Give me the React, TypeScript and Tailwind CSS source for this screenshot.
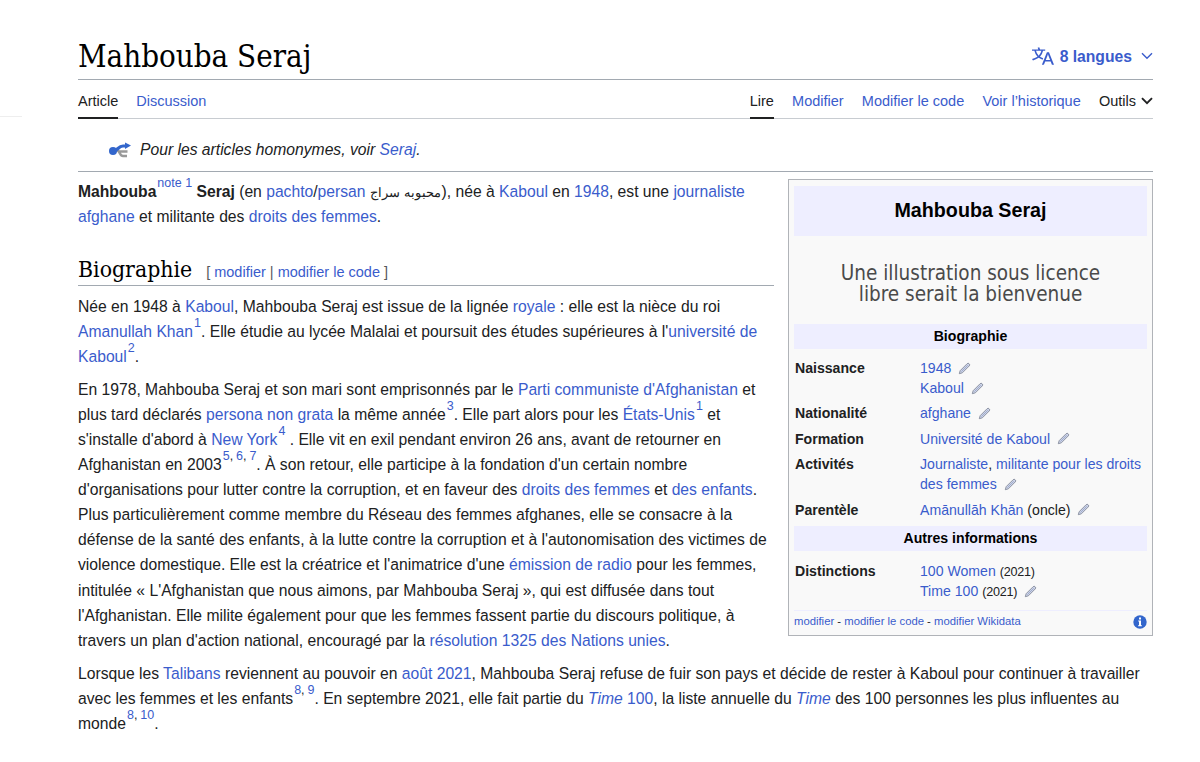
import React from "react";

const sans = "font-['Liberation_Sans',Arial,sans-serif]";
const serif = "font-['DejaVu_Serif_Condensed','DejaVu_Serif',serif]";

function A({ children }: { children: React.ReactNode }) {
  return (
    <a href="#" className="text-[#3a5ccc]">
      {children}
    </a>
  );
}

function Sup({ children }: { children: React.ReactNode }) {
  return (
    <sup className="relative top-[-10px] ml-px align-baseline text-[12.5px] leading-none text-[#3a5ccc]">
      {children}
    </sup>
  );
}

function Refs({ ids }: { ids: number[] }) {
  return (
    <Sup>
      {ids.map((id, i) => (
        <React.Fragment key={id}>
          {i > 0 && <span className="text-[#202122] [word-spacing:-0.6px]">, </span>}
          {id}
        </React.Fragment>
      ))}
    </Sup>
  );
}

function Pencil() {
  return (
    <svg viewBox="0 0 12 12" className="ml-[7px] inline-block h-[13px] w-[13px] align-[-1.5px]">
      <path
        d="M1.2 10.8 2 8 8.4 1.6a1.2 1.2 0 0 1 1.8 0l.2.2a1.2 1.2 0 0 1 0 1.8L4 10z"
        fill="#cdd4e8"
        stroke="#7f8798"
        strokeWidth="0.8"
        strokeLinejoin="round"
      />
      <path d="M3.2 8.8 9 3" stroke="#9aa6c8" strokeWidth="0.8" />
    </svg>
  );
}

function Row({ label, children }: { label: string; children: React.ReactNode }) {
  return (
    <div className="flex pl-px">
      <div className="w-[125px] shrink-0 font-bold">{label}</div>
      <div className="whitespace-nowrap">{children}</div>
    </div>
  );
}

function Infobox() {
  return (
    <aside className="mt-[7px] flex h-[457px] w-[365px] shrink-0 flex-col border border-[#b0b3b8] bg-[#f9f9f9] px-[5px] pt-1.5 text-[14.1px] leading-5">
      <div className="flex h-[50px] items-center justify-center bg-[#eeeeff] pb-0.5 text-[19.7px] font-bold text-black">
        Mahbouba Seraj
      </div>
      <div className="flex h-[88px] flex-col justify-center pt-[7px] text-center font-['DejaVu_Sans_Condensed','Noto_Sans',sans-serif] text-[20.5px] leading-[21px] text-[#4a4a4a]">
        <span>Une illustration sous licence</span>
        <span>libre serait la bienvenue</span>
      </div>
      <div className="flex h-[25px] items-center justify-center bg-[#eeeeff] pb-px font-bold text-black">
        Biographie
      </div>
      <div className="flex flex-col gap-[5.4px] pt-[9px]">
        <Row label="Naissance">
          <A>1948</A>
          <Pencil />
          <br />
          <A>Kaboul</A>
          <Pencil />
        </Row>
        <Row label="Nationalité">
          <A>afghane</A>
          <Pencil />
        </Row>
        <Row label="Formation">
          <A>Université de Kaboul</A>
          <Pencil />
        </Row>
        <Row label="Activités">
          <A>Journaliste</A>, <A>militante pour les droits</A>
          <br />
          <A>des femmes</A>
          <Pencil />
        </Row>
        <Row label="Parentèle">
          <A>Amānullāh Khān</A> (oncle)
          <Pencil />
        </Row>
      </div>
      <div className="mt-[6.5px] flex h-[25px] items-center justify-center bg-[#eeeeff] pb-px font-bold text-black">
        Autres informations
      </div>
      <div className="pt-[11px] leading-[19px]">
        <Row label="Distinctions">
          <A>100 Women</A> <span className="text-[12.6px] tracking-[-0.2px]">(2021)</span>
          <br />
          <A>Time 100</A> <span className="text-[12.6px] tracking-[-0.2px]">(2021)</span>
          <Pencil />
        </Row>
      </div>
      <div className="mt-2 flex h-[22px] items-center justify-between border-t border-[#eeeeff] text-[11.3px]">
        <span className="pb-px">
          <A>modifier</A> - <A>modifier le code</A> - <A>modifier Wikidata</A>
        </span>
        <svg viewBox="0 0 14 14" className="mt-px h-3.5 w-3.5">
          <circle cx="7" cy="7" r="6.7" fill="#3366cc" />
          <path d="M6 2.5h2v2H6zM5.2 5.6H8v4.6h.9v1H5.1v-1H6V6.6h-.8z" fill="#fff" />
        </svg>
      </div>
    </aside>
  );
}

function Header() {
  return (
    <header>
      <div className="flex h-[80px] items-end justify-between border-b border-[#a2a9b1]">
        <h1 className={`${serif} pb-1 text-[31px] leading-[38px] text-black`}>Mahbouba Seraj</h1>
        <div className="mb-2.5 flex items-center text-[15.7px] font-bold text-[#3a5ccc]">
          <svg viewBox="0 0 20 20" className="mr-1.5 h-[22px] w-[22px]" fill="currentColor">
            <path d="M20 18h-1.44a.61.61 0 0 1-.4-.12.8.8 0 0 1-.23-.31L17 15h-5l-1 2.54a.8.8 0 0 1-.22.3.6.6 0 0 1-.4.14H9l4.55-11.47h1.89zm-3.53-4.31L14.89 9.5a12 12 0 0 1-.39-1.24q-.09.37-.19.69l-.19.56-1.58 4.19zm-6.3-1.58a13.4 13.4 0 0 1-2.91-1.41 11.46 11.46 0 0 0 2.81-5.37H12V4H7.31a4 4 0 0 0-.2-.56C6.87 2.79 6.6 2 6.6 2l-1.47.5s.4.89.6 1.5H0v1.33h2.15A11.23 11.23 0 0 0 5 10.7a17.2 17.2 0 0 1-5 2.1q.56.82.87 1.38a23.3 23.3 0 0 0 5.22-2.51 15.6 15.6 0 0 0 3.56 1.77zM3.63 5.33h4.91a8.1 8.1 0 0 1-2.45 4.45 9.1 9.1 0 0 1-2.46-4.45" />
          </svg>
          8 langues
          <svg viewBox="0 0 12 8" className="ml-[9px] h-2 w-3" fill="none" stroke="currentColor" strokeWidth="1.4">
            <path d="M1 1.2 6 6.2l5-5" />
          </svg>
        </div>
      </div>
      <nav className="flex h-[39px] justify-between border-b border-[#c8ccd1] text-[14.5px] leading-[42px]">
        <div className="flex gap-[18px]">
          <span className="h-[39px] border-b-2 border-[#202122]">Article</span>
          <A>Discussion</A>
        </div>
        <div className="flex gap-[18.2px]">
          <span className="h-[39px] border-b-2 border-[#202122]">Lire</span>
          <A>Modifier</A>
          <A>Modifier le code</A>
          <A>Voir l’historique</A>
          <span className="flex h-[42px] items-center">
            Outils
            <svg viewBox="0 0 12 8" className="ml-[5px] h-2 w-3" fill="none" stroke="currentColor" strokeWidth="1.9">
              <path d="M1 1.2 6 6.2l5-5" />
            </svg>
          </span>
        </div>
      </nav>
      <div className="flex h-[53px] items-center border-b border-[#a2a9b1] pt-2.5 pl-[31px] italic">
        <svg viewBox="0 0 22 16" className="mr-[9px] h-4 w-[22px] shrink-0" fill="none">
          <path d="M8 8.5c3 0 2.500 5.500 6 5.500h4M10 9.500h8.500" stroke="#999" strokeWidth="2.400" />
          <path d="M4 9c5 0 5-5 10-5h3" stroke="#3366cc" strokeWidth="3.200" />
          <path d="M16 0.500 22 3.500 16 7z" fill="#3366cc" />
          <circle cx="4" cy="9" r="4" fill="#3366cc" />
        </svg>
        <span>
          Pour les articles homonymes, voir <A>Seraj</A>.
        </span>
      </div>
    </header>
  );
}

export default function App() {
  return (
    <div className={`${sans} flex h-[762px] w-[1200px] bg-white text-[15.68px] leading-[25.1px] text-[#202122]`}>
      <div className="mt-[116px] h-px w-[22px] bg-[#eeeeee]" />
      <main className="ml-14 w-[1075px]">
        <Header />
        <div className="flex h-[488.6px] justify-between">
          <article className="w-[696px] pt-[7px] whitespace-nowrap">
            <p>
              <b>Mahbouba</b>
              <Sup>note 1</Sup> <b>Seraj</b> (en <A>pachto</A>/<A>persan</A>{" "}
              <span dir="rtl" className="mr-px text-[13.2px] leading-none">
                محبوبه سراج
              </span>
              ), née à <A>Kaboul</A> en <A>1948</A>, est une <A>journaliste</A>
              <br />
              <A>afghane</A> et militante des <A>droits des femmes</A>.
            </p>
            <h2 className="mt-6 flex h-[33px] items-baseline border-b border-[#a2a9b1]">
              <span className={`${serif} text-[22.8px] leading-[32px] text-black`}>Biographie</span>
              <span className="ml-3.5 text-[14.5px] text-[#54595d]">
                [ <A>modifier</A> | <A>modifier le code</A> ]
              </span>
            </h2>
            <p className="mt-2">
              Née en 1948 à <A>Kaboul</A>, Mahbouba Seraj est issue de la lignée <A>royale</A> : elle est la nièce du
              roi
              <br />
              <A>Amanullah Khan</A>
              <Refs ids={[1]} />. Elle étudie au lycée Malalai et poursuit des études supérieures à l'
              <A>université de</A>
              <br />
              <A>Kaboul</A>
              <Refs ids={[2]} />.
            </p>
            <p className="mt-[7.3px]">
              En 1978, Mahbouba Seraj et son mari sont emprisonnés par le <A>Parti communiste d'Afghanistan</A> et
              <br />
              plus tard déclarés <A>persona non grata</A> la même année
              <Refs ids={[3]} />. Elle part alors pour les <A>États-Unis</A>
              <Refs ids={[1]} /> et
              <br />
              s'installe d'abord à <A>New York</A>
              <Refs ids={[4]} /> . Elle vit en exil pendant environ 26 ans, avant de retourner en
              <br />
              Afghanistan en 2003
              <Refs ids={[5, 6, 7]} />. À son retour, elle participe à la fondation d'un certain nombre
              <br />
              d'organisations pour lutter contre la corruption, et en faveur des <A>droits des femmes</A> et{" "}
              <A>des enfants</A>.
              <br />
              Plus particulièrement comme membre du Réseau des femmes afghanes, elle se consacre à la
              <br />
              défense de la santé des enfants, à la lutte contre la corruption et à l'autonomisation des victimes de
              <br />
              violence domestique. Elle est la créatrice et l'animatrice d'une <A>émission de radio</A> pour les
              femmes,
              <br />
              intitulée « L'Afghanistan que nous aimons, par Mahbouba Seraj », qui est diffusée dans tout
              <br />
              l'Afghanistan. Elle milite également pour que les femmes fassent partie du discours politique, à
              <br />
              travers un plan d'action national, encouragé par la <A>résolution 1325 des Nations unies</A>.
            </p>
          </article>
          <Infobox />
        </div>
        <p className="whitespace-nowrap">
          Lorsque les <A>Talibans</A> reviennent au pouvoir en <A>août 2021</A>, Mahbouba Seraj refuse de fuir son pays
          et décide de rester à Kaboul pour continuer à travailler
          <br />
          avec les femmes et les enfants
          <Refs ids={[8, 9]} />. En septembre 2021, elle fait partie du{" "}
          <A>
            <i>Time</i> 100
          </A>
          , la liste annuelle du{" "}
          <A>
            <i>Time</i>
          </A>{" "}
          des 100 personnes les plus influentes au
          <br />
          monde
          <Refs ids={[8, 10]} />.
        </p>
      </main>
    </div>
  );
}
